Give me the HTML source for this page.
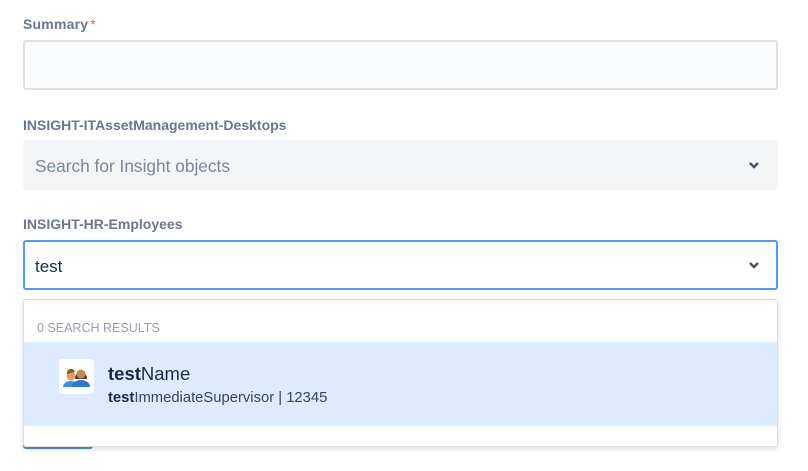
<!DOCTYPE html>
<html><head><style>
body{margin:0;background:#fff;font-family:"Liberation Sans",sans-serif;width:808px;height:471px;position:relative;overflow:hidden}
.lbl{position:absolute;left:23px;font-size:14px;font-weight:bold;color:#6b778c}
.box{position:absolute;left:23px;width:755px;box-sizing:border-box;border-radius:3px}
.chev{position:absolute;right:18px;top:50%;margin-top:-4px}
</style></head><body>
<div class="lbl" style="top:16px;letter-spacing:0.2px">Summary<span style="color:#ff5630;font-weight:normal;margin-left:2px">*</span></div>
<div class="box" style="top:40px;height:50px;background:#fafbfc;border:2px solid #dfe1e6"></div>
<div class="lbl" style="top:117px">INSIGHT-ITAssetManagement-Desktops</div>
<div class="box" style="top:140px;height:50px;background:#f4f5f7">
<div style="position:absolute;left:12px;top:16px;font-size:17.3px;color:#7a869a">Search for Insight objects</div>
<svg class="chev" width="12" height="8" viewBox="0 0 12 8"><path d="M2 2l4 4 4-4" stroke="#42526e" stroke-width="2.4" fill="none"/></svg>
</div>
<div class="lbl" style="top:216px">INSIGHT-HR-Employees</div>
<div class="box" style="top:240px;height:50px;background:#fff;border:2px solid #4c9aff">
<div style="position:absolute;left:10px;top:15px;font-size:17px;color:#172b4d">test</div>
<svg class="chev" width="12" height="8" viewBox="0 0 12 8" style="right:16px"><path d="M2 2l4 4 4-4" stroke="#42526e" stroke-width="2.4" fill="none"/></svg>
</div>
<div style="position:absolute;left:23px;top:440px;width:70px;height:9px;background:#4c8ae6;border-radius:3px"></div>
<div class="box" style="top:299px;height:148px;background:#fff;border:1px solid #dcdfe4;box-shadow:0 2px 5px rgba(9,30,66,.15)">
<div style="position:absolute;left:13px;top:21px;font-size:12.5px;color:#97a0af">0 SEARCH RESULTS</div>
<div style="position:absolute;left:0;right:0;top:42px;height:84px;background:#deebff">
<div style="position:absolute;left:35px;top:17px;width:35px;height:35px;background:#fff;border-radius:4px">
<svg width="35" height="35" viewBox="0 0 35 35">
<circle cx="12" cy="17" r="4.5" fill="#e0a060"/><path d="M8 15a4 4 0 0 1 8 -2z" fill="#8a5a2a"/>
<path d="M4 28a8 6 0 0 1 16 0z" fill="#3a8ee6"/>
<path d="M16 20a6 7 0 1 1 12 0z" fill="#5a3a20"/>
<circle cx="22" cy="15" r="4.5" fill="#c8844a"/>
<path d="M13 28a9 7 0 0 1 18 0z" fill="#2a7ad8"/>
</svg></div>
<div style="position:absolute;left:84px;top:21px;font-size:18.5px;color:#172b4d"><b>test</b>Name</div>
<div style="position:absolute;left:84px;top:48px;font-size:14.8px;color:#344563"><b style="color:#172b4d">test</b>ImmediateSupervisor | 12345</div>
</div>
</div>
</body></html>
